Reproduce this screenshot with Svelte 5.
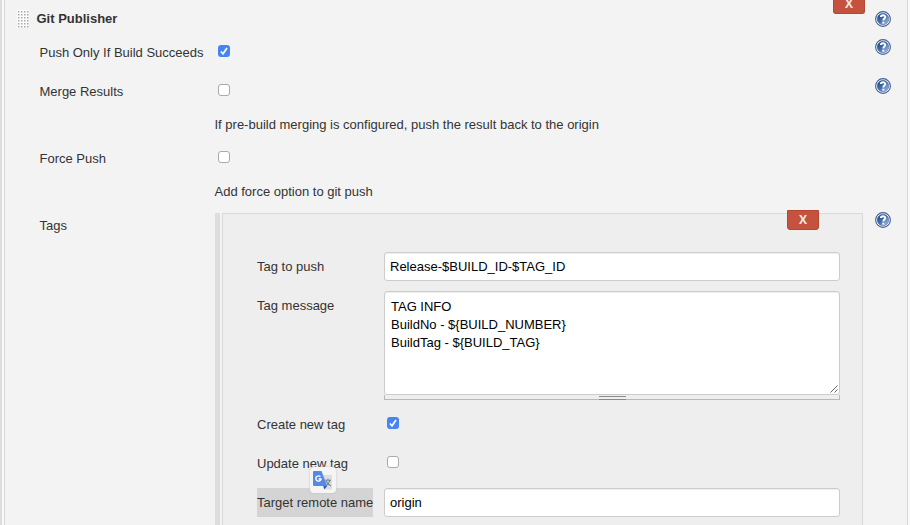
<script>
  const message = 'TAG INFO\nBuildNo - ${BUILD_NUMBER}\nBuildTag - ${BUILD_TAG}';
</script>

{#snippet help()}
  <svg class="help" width="16" height="16" viewBox="0 0 16 16" aria-label="Help">
    <defs>
      <linearGradient id="helpFill" x1="0" y1="0" x2="1" y2="1">
        <stop offset="0.15" stop-color="#234a8c" />
        <stop offset="0.5" stop-color="#4a71ad" />
        <stop offset="0.9" stop-color="#a3bcdd" />
      </linearGradient>
    </defs>
    <circle cx="8" cy="8" r="7.4" fill="#fff" stroke="#3f5f97" stroke-width="1.1" />
    <circle cx="8" cy="8" r="5.8" fill="url(#helpFill)" stroke="#3f5f97" stroke-width="0.5" />
    <path d="M5.9 6.1C5.9 3.6 10.3 3.5 10.3 6.1C10.3 7.5 8.3 7.7 8.3 9.5" fill="none" stroke="#fff" stroke-width="1.9" />
    <rect x="7.3" y="10.7" width="2" height="1.9" fill="#fff" />
  </svg>
{/snippet}

{#snippet box(checked)}
  <span class="box" class:checked role="checkbox" aria-checked={checked} tabindex="-1">
    {#if checked}
      <svg width="12" height="12" viewBox="0 0 12 12"><path d="M2.9 6.5L5 8.8L9 3" fill="none" stroke="#fff" stroke-width="1.7" /></svg>
    {/if}
  </span>
{/snippet}

<div class="page">
  <div class="publisher">
    <div class="title">
      <svg class="grip" width="12" height="18" viewBox="0 0 12 18">
        <rect width="12" height="18" fill="#fcfcfc" />
        {#each [1, 4, 7, 10, 13, 16] as y}
          {#each [1, 4, 7, 10] as x}
            <rect {x} {y} width="1.5" height="1.5" fill="#aaa" />
          {/each}
        {/each}
      </svg>
      <b>Git Publisher</b>
      <button class="delete first">X</button>
      {@render help()}
    </div>

    <div class="row"><span class="name">Push Only If Build Succeeds</span>{@render box(true)}{@render help()}</div>
    <div class="row"><span class="name">Merge Results</span>{@render box(false)}{@render help()}</div>
    <p>If pre-build merging is configured, push the result back to the origin</p>
    <div class="row"><span class="name">Force Push</span>{@render box(false)}</div>
    <p>Add force option to git push</p>

    <div class="tags">
      <span class="name">Tags</span>
      <div class="repeat">
        <div class="tag">
          <div class="top"><button class="delete">X</button></div>
          <div class="field"><span class="label">Tag to push</span><div class="input">Release-$BUILD_ID-$TAG_ID</div></div>
          <div class="field area">
            <span class="label">Tag message</span>
            <div class="stack">
              <div class="textarea">{message}
                <svg class="corner" width="8" height="8" viewBox="0 0 8 8"><path d="M0.5 7.5L7.5 0.5M4.5 7.5L7.5 4.5" stroke="#555" stroke-width="0.9" /></svg>
              </div>
              <div class="handle"><i></i></div>
            </div>
          </div>
          <div class="field check"><span class="label">Create new tag</span>{@render box(true)}</div>
          <div class="field check"><span class="label">Update new tag</span>{@render box(false)}
            <span class="translate">
              <svg width="20" height="20" viewBox="0 0 20 20">
                <path d="M8 4H18.2Q19 4 19 5V17.5Q19 18.5 18 18.5H12Z" fill="#dedede" />
                <path d="M12.3 9.3H18M15 7.8V9.3M17 9.3Q15.8 13 12.7 14.8M13.2 10Q14.5 13 17.8 15" fill="none" stroke="#71858b" stroke-width="1.1" />
                <path d="M10.3 15H14.2L11.2 18.6Z" fill="#3454b4" />
                <path d="M1 0H8.5L14.2 15H1Q0 15 0 14V1Q0 0 1 0Z" fill="#5489e9" />
                <path d="M7.4 5.8A2.6 2.6 0 1 0 8 8H5.6" fill="none" stroke="#fff" stroke-width="1.4" />
              </svg>
            </span>
          </div>
          <div class="field"><span class="label selected">Target remote name</span><div class="input">origin</div></div>
        </div>
      </div>
      {@render help()}
    </div>
  </div>
</div>

<style>
  :global(body) { overflow: hidden; }
  .page {
    box-sizing: border-box;
    width: 910px;
    height: 525px;
    overflow: hidden;
    padding-left: 2px;
    border-left: 2px solid #ddd;
    background: #f9f9f9;
    color: #333;
    font: 13px/18px "Liberation Sans", Helvetica, Arial, sans-serif;
  }
  .publisher {
    box-sizing: border-box;
    width: 904px;
    height: 525px;
    background: #f3f3f3;
    border: solid #d9d9d9;
    border-width: 0 1px;
  }
  .title { display: flex; height: 33px; padding-left: 12px; }
  .grip { margin: 10px 7.5px 0 0; }
  .title b { margin-top: 10px; }
  .delete {
    box-sizing: border-box;
    width: 32px;
    height: 20px;
    padding: 0;
    border: 1px solid #b44632;
    border-radius: 0 0 3px 3px;
    background: #c4523f;
    color: #f5e9e6;
    font: bold 12px/18px "Open Sans", "Liberation Sans", sans-serif;
  }
  .first {
    height: 14px;
    margin: 0 10px 0 auto;
    border-top: 0;
    line-height: 7px;
    padding-bottom: 6px;
  }
  .title .help { margin: 11px 16px 0 0; }
  .help { flex: none; margin: 6px 16px 0 auto; }
  .row { display: flex; height: 39px; padding-left: 34.5px; }
  .name { flex: none; box-sizing: border-box; width: 175.5px; padding-top: 11px; }
  .box {
    box-sizing: border-box;
    flex: none;
    width: 12px;
    height: 12px;
    margin: 12px 0 0 3px;
    border: 1px solid #aaa;
    border-radius: 3px;
    background: #fff;
  }
  .box.checked { border: 0; background: #4684f4; }
  .box svg { display: block; }
  p { height: 18px; margin: 0; padding: 5px 0 5px 209.5px; }
  .tags { display: flex; height: 320px; padding-left: 34.5px; }
  .repeat {
    box-sizing: border-box;
    width: 648px;
    height: 320px;
    margin-top: 7px;
    padding-left: 2px;
    border-left: 5px solid #ddd;
  }
  .tag {
    box-sizing: border-box;
    width: 641px;
    height: 320px;
    padding: 0 22px 0 34px;
    border: 1px solid #d9d9d9;
    background: #eee;
  }
  .top { display: flex; justify-content: flex-end; height: 38px; margin-top: -4px; padding-right: 21px; }
  .top + .field { margin-top: 4px; }
  .field { display: flex; height: 39px; }
  .label { flex: none; box-sizing: border-box; width: 127px; height: 29px; padding-top: 6px; }
  .input {
    box-sizing: border-box;
    width: 456px;
    height: 29px;
    padding: 5px;
    border: 1px solid #ccc;
    border-radius: 3px;
    background: #fff;
    box-shadow: inset 0 1px 1px #eee;
    color: #000;
  }
  .area { height: 119px; }
  .stack { width: 456px; }
  .textarea {
    position: relative;
    box-sizing: border-box;
    height: 104px;
    padding: 6px;
    overflow: hidden;
    border: 1px solid #ccc;
    border-radius: 3px;
    background: #fff;
    box-shadow: inset 0 1px 1px #eee;
    color: #000;
    white-space: pre;
  }
  .corner { position: absolute; right: 1px; bottom: 1px; }
  .handle {
    box-sizing: border-box;
    height: 5px;
    border: solid #b8b8b8;
    border-width: 0 1px 1px;
  }
  .handle i {
    box-sizing: border-box;
    display: block;
    width: 27px;
    height: 4px;
    margin: 0 auto;
    border: solid #8b8b8b;
    border-width: 1px 0;
    transform: translateY(1px);
  }
  .check { position: relative; }
  .check .box { margin: 7px 0 0 3px; }
  .selected { width: 116px; margin-right: 11px; background: #d4d4d4; white-space: nowrap; }
  .translate {
    position: absolute;
    left: 53px;
    top: 18px;
    box-sizing: border-box;
    width: 26px;
    height: 26px;
    padding: 4px 3px 2px;
    border-radius: 4px;
    background: #f5f5f5;
    box-shadow: 0 0 2px #bbb;
  }
  .translate svg { display: block; }
</style>
